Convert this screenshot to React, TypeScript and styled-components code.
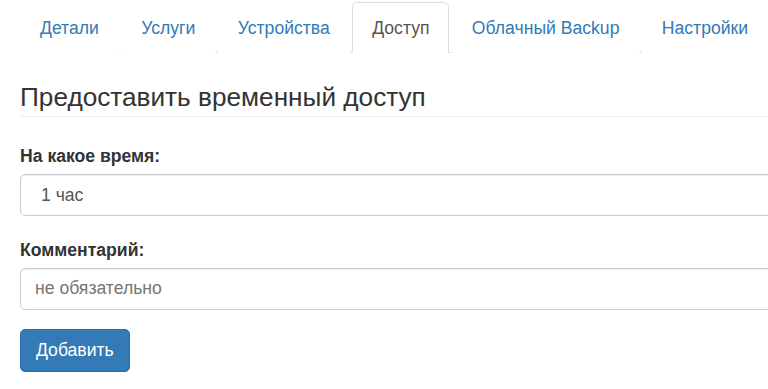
import React from 'react'
import styled, { createGlobalStyle } from 'styled-components'

const GlobalStyle = createGlobalStyle`
  * {
    box-sizing: border-box;
  }
  html, body {
    margin: 0;
    overflow: hidden;
    background: #fff;
  }
  body {
    font-family: "Liberation Sans", Arial, Helvetica, sans-serif;
    font-size: 17.6px;
    line-height: 24px;
    color: #333;
  }
`

const Page = styled.div`
  width: 800px;
  padding: 2px 0 0 20px;
`

const Tabs = styled.ul`
  display: flex;
  margin: 0;
  padding: 0;
  list-style: none;
  border-bottom: 1px solid #ddd;
`

const Tab = styled.li`
  margin-bottom: -1px;
  margin-right: 2.4px;
`

const TabLink = styled.a<{ $active?: boolean }>`
  display: block;
  padding: 12.5px 19px;
  line-height: 24px;
  border: 1px solid ${({ $active }) => ($active ? '#ddd' : 'transparent')};
  border-bottom-color: transparent;
  border-radius: 5px 5px 0 0;
  background: #fff;
  color: ${({ $active }) => ($active ? '#555' : '#337ab7')};
  text-decoration: none;
  cursor: ${({ $active }) => ($active ? 'default' : 'pointer')};
`

const Heading = styled.h3`
  margin: 29px 0 0;
  padding-bottom: 2px;
  font-size: 26.2px;
  font-weight: 400;
  line-height: 31.7px;
  color: #333;
  border-bottom: 1px solid #eee;
`

const Form = styled.form`
  margin-top: 27px;
`

const FormGroup = styled.div`
  margin-bottom: 22px;
`

const Label = styled.label`
  display: block;
  margin-bottom: 6px;
  font-weight: 700;
`

const Select = styled.select`
  display: block;
  width: 100%;
  height: 42px;
  padding: 0 14px;
  font: inherit;
  color: #555;
  background: #fff;
  border: 1px solid #ccc;
  border-radius: 5px;
  box-shadow: inset 0 1px 1px rgba(0, 0, 0, 0.075);
  appearance: none;
  text-indent: 6px;
`

const Input = styled.input`
  display: block;
  width: 100%;
  height: 42px;
  padding: 0 14px;
  font: inherit;
  color: #555;
  background: #fff;
  border: 1px solid #ccc;
  border-radius: 5px;
  box-shadow: inset 0 1px 1px rgba(0, 0, 0, 0.075);

  ::placeholder {
    color: #999;
  }
`

const Button = styled.button`
  display: inline-block;
  height: 43px;
  padding: 0 15px;
  margin-top: -3px;
  font: inherit;
  color: #fff;
  background: #337ab7;
  border: 1px solid #2e6da4;
  border-radius: 5px;
  cursor: pointer;
`

const tabs = ['Детали', 'Услуги', 'Устройства', 'Доступ', 'Облачный Backup', 'Настройки']

export default function App(): JSX.Element {
  return (
    <>
      <GlobalStyle />
      <Page>
        <Tabs>
          {tabs.map((t) => (
            <Tab key={t}>
              <TabLink $active={t === 'Доступ'}>{t}</TabLink>
            </Tab>
          ))}
        </Tabs>
        <Heading>Предоставить временный доступ</Heading>
        <Form onSubmit={(e) => e.preventDefault()}>
          <FormGroup>
            <Label>На какое время:</Label>
            <Select defaultValue="1">
              <option value="1">1 час</option>
              <option value="3">3 часа</option>
              <option value="24">1 день</option>
            </Select>
          </FormGroup>
          <FormGroup>
            <Label>Комментарий:</Label>
            <Input placeholder="не обязательно" />
          </FormGroup>
          <Button type="submit">Добавить</Button>
        </Form>
      </Page>
    </>
  )
}
